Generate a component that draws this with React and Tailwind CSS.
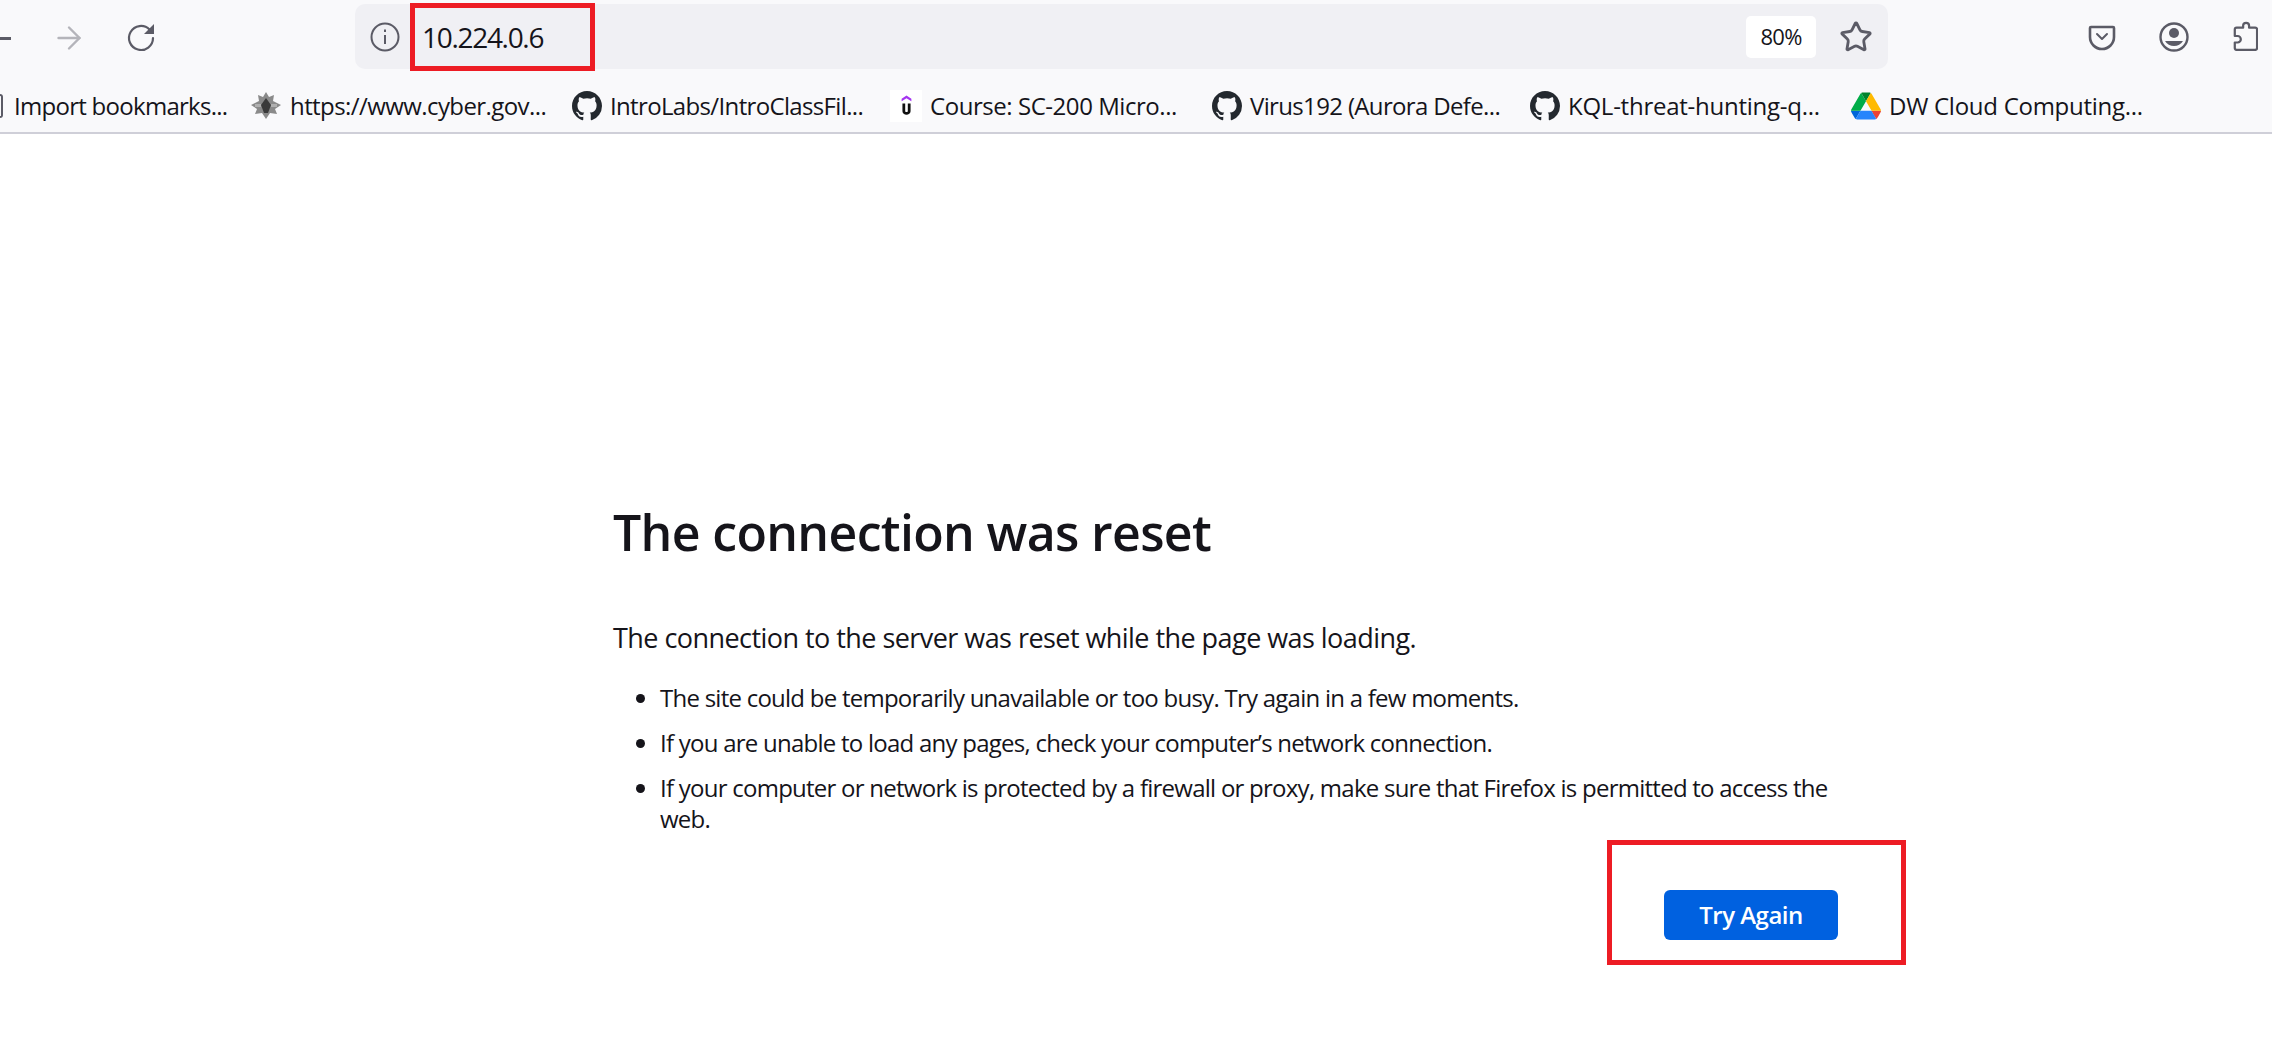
import React from "react";
import { ArrowRight, Star } from "lucide-react";

const FONT = "font-['Open_Sans','Noto_Sans',sans-serif]";

function GithubMark() {
  return (
    <svg viewBox="0 0 16 16" className="w-[30px] h-[30px] shrink-0" fill="#24292f">
      <path d="M8 0C3.58 0 0 3.58 0 8c0 3.54 2.29 6.53 5.47 7.59.4.07.55-.17.55-.38 0-.19-.01-.82-.01-1.49-2.01.37-2.53-.49-2.69-.94-.09-.23-.48-.94-.82-1.13-.28-.15-.68-.52-.01-.53.63-.01 1.08.58 1.23.82.72 1.21 1.87.87 2.33.66.07-.52.28-.87.51-1.07-1.78-.2-3.64-.89-3.64-3.95 0-.87.31-1.59.82-2.15-.08-.2-.36-1.02.08-2.12 0 0 .67-.21 2.2.82.64-.18 1.32-.27 2-.27s1.36.09 2 .27c1.53-1.04 2.2-.82 2.2-.82.44 1.1.16 1.92.08 2.12.51.56.82 1.27.82 2.15 0 3.07-1.87 3.75-3.65 3.95.29.25.54.73.54 1.48 0 1.07-.01 1.93-.01 2.2 0 .21.15.46.55.38A8.01 8.01 0 0 0 16 8c0-4.42-3.58-8-8-8z" />
    </svg>
  );
}

function CyberIcon() {
  return (
    <svg viewBox="0 0 32 32" className="w-[32px] h-[32px] shrink-0">
      <path d="M16 2l3 5 5-2-1 6 8 4-6 4 2 5-7-1-4 6-4-6-7 1 2-5-6-4 8-4-1-6 5 2z" fill="#8a8a8a" />
      <path d="M16 8l5 7-3 8h-4l-3-8z" fill="#3a3a3a" />
      <path d="M5 14h6v3H5zM21 14h6v3h-6z" fill="#b0b0b0" />
    </svg>
  );
}

function UdemyIcon() {
  return (
    <div className="w-[32px] h-[32px] shrink-0 bg-white flex items-center justify-center">
      <svg viewBox="0 0 16 28" className="w-[13px] h-[24px]">
        <path d="M8 1l6 4v3L8 4.5 2 8V5z" fill="#a435f0" />
        <path d="M3 11h3.4v9c0 2 3.2 2 3.2 0v-9H13v9.5c0 5.5-10 5.5-10 0z" fill="#111" />
      </svg>
    </div>
  );
}

function DriveIcon() {
  return (
    <svg viewBox="0 0 87.3 78" className="w-[30px] h-[30px] shrink-0">
      <path d="m6.6 66.85 3.85 6.65c.8 1.4 1.95 2.5 3.3 3.3l13.75-23.8h-27.5c0 1.55.4 3.1 1.2 4.5z" fill="#0066da" />
      <path d="m43.65 25-13.75-23.8c-1.35.8-2.5 1.9-3.3 3.3l-25.4 44a9.06 9.06 0 0 0-1.2 4.5h27.5z" fill="#00ac47" />
      <path d="m73.55 76.8c1.35-.8 2.5-1.9 3.3-3.3l1.6-2.75 7.65-13.25c.8-1.4 1.2-2.95 1.2-4.5h-27.5l5.85 11.5z" fill="#ea4335" />
      <path d="m43.65 25 13.75-23.8c-1.35-.8-2.9-1.2-4.5-1.2h-18.5c-1.6 0-3.15.45-4.5 1.2z" fill="#00832d" />
      <path d="m59.8 53h-32.3l-13.75 23.8c1.35.8 2.9 1.2 4.5 1.2h50.8c1.6 0 3.15-.45 4.5-1.2z" fill="#2684fc" />
      <path d="m73.4 26.5-12.7-22c-.8-1.4-1.95-2.5-3.3-3.3l-13.75 23.8 16.15 28h27.45c0-1.55-.4-3.1-1.2-4.5z" fill="#ffba00" />
    </svg>
  );
}

function ReloadIcon() {
  return (
    <svg viewBox="0 0 32 32" className="w-[32px] h-[32px]" fill="none">
      <path d="M23.5 8.5A12 12 0 1 0 27 17" stroke="#5b5b66" strokeWidth="2.2" strokeLinecap="round" />
      <path d="M28 3v10H18z" fill="#5b5b66" />
    </svg>
  );
}

function InfoIcon() {
  return (
    <svg viewBox="0 0 30 30" className="w-[30px] h-[30px]" fill="none" stroke="#5b5b66" strokeWidth="2">
      <circle cx="15" cy="15" r="13.5" />
      <path d="M15 13v9" />
      <path d="M15 7.5v2.5" />
    </svg>
  );
}

function PocketIcon() {
  return (
    <svg viewBox="0 0 28 28" className="w-[28px] h-[28px]" fill="none" stroke="#5b5b66" strokeWidth="2.6" strokeLinecap="round" strokeLinejoin="round">
      <path d="M3 4h22a1 1 0 0 1 1 1v9a12 12 0 0 1-24 0V5a1 1 0 0 1 1-1z" />
      <path d="M9 11l5 5 5-5" strokeWidth="2" />
    </svg>
  );
}

function AccountIcon() {
  return (
    <svg viewBox="0 0 30 30" className="w-[30px] h-[30px]">
      <circle cx="15" cy="15" r="13.5" fill="none" stroke="#5b5b66" strokeWidth="2.4" />
      <circle cx="15" cy="11" r="5" fill="#5b5b66" />
      <path d="M6 19h18a10.5 10.5 0 0 1-18 0z" fill="#5b5b66" />
    </svg>
  );
}

function PuzzleIcon() {
  return (
    <svg viewBox="0 0 28 32" className="w-[26px] h-[30px]" fill="none" stroke="#5b5b66" strokeWidth="2.4" strokeLinejoin="round">
      <path d="M12 7V5a3.2 3.2 0 0 1 6.4 0v2H25a2 2 0 0 1 2 2v20a2 2 0 0 1-2 2H5a2 2 0 0 1-2-2v-6h3a3.5 3.5 0 0 0 0-7H3V9a2 2 0 0 1 2-2z" />
    </svg>
  );
}

const bookmarks = [
  { icon: <div className="w-[3px] h-[24px] mr-[3px] border-2 border-l-0 border-[#5b5b66] rounded-r-[3px]" />, label: "Import bookmarks...", cls: "w-[250px] tracking-[-0.72px]" },
  { icon: <CyberIcon />, label: "https://www.cyber.gov...", cls: "w-[322px] tracking-[-0.58px]" },
  { icon: <GithubMark />, label: "IntroLabs/IntroClassFil...", cls: "w-[318px] tracking-[-0.65px]" },
  { icon: <UdemyIcon />, label: "Course: SC-200 Micro...", cls: "w-[322px] tracking-[-0.45px]" },
  { icon: <GithubMark />, label: "Virus192 (Aurora Defe...", cls: "w-[318px] tracking-[-0.65px]" },
  { icon: <GithubMark />, label: "KQL-threat-hunting-q...", cls: "w-[321px] tracking-[-0.25px]" },
  { icon: <DriveIcon />, label: "DW Cloud Computing...", cls: "w-[300px] tracking-[-0.27px]" },
];

export default function App() {
  return (
    <div className={`relative h-[1037px] w-[2272px] overflow-hidden bg-white text-[#15141a] ${FONT}`}>
      {/* Toolbar */}
      <div className="h-[134px] bg-[#f9f9fb] border-b-2 border-[#cfcfd8] flex flex-col">
        <div className="h-[69px] pt-[4px] flex items-start">
          <div className="w-[355px] h-[65px] flex items-center shrink-0">
            <div className="w-[11px] h-[3px] mt-[3px] bg-[#5b5b66]" />
            <ArrowRight className="ml-[40px] w-[36px] h-[36px] text-[#b4b4ba] mt-[3px]" strokeWidth={1.6} />
            <div className="ml-[39px]"><ReloadIcon /></div>
          </div>
          <div className="w-[1533px] h-[65px] rounded-[10px] bg-[#f0f0f4] flex items-center shrink-0 pl-[15px] pr-[15px]">
            <InfoIcon />
            <span className="ml-[22px] text-[28px] tracking-[-1.3px]">10.224.0.6</span>
            <div className="ml-auto w-[70px] h-[42px] rounded-[5px] bg-white flex items-center justify-center text-[22px] tracking-[-0.7px]">80%</div>
            <Star className="ml-[23px] w-[34px] h-[34px] text-[#5b5b66]" strokeWidth={2} />
          </div>
          <div className="flex-1 h-[65px] flex items-center">
            <div className="ml-[200px]"><PocketIcon /></div>
            <div className="ml-[43px]"><AccountIcon /></div>
            <div className="ml-[43px] mb-[2px]"><PuzzleIcon /></div>
          </div>
        </div>
        <div className="flex-1 flex items-center pt-[10px] text-[24px]">
          {bookmarks.map((b) => (
            <div key={b.label} className={`flex items-center gap-[8px] shrink-0 whitespace-nowrap ${b.cls}`}>
              {b.icon}
              <span>{b.label}</span>
            </div>
          ))}
        </div>
      </div>

      {/* Error page */}
      <div className="pl-[613px] pt-[363px] w-[1838px]">
        <h1 className="text-[50px] leading-[70px] font-semibold tracking-[-0.65px]">The connection was reset</h1>
        <p className="mt-[53px] text-[27px] leading-[36px] tracking-[-0.55px]">The connection to the server was reset while the page was loading.</p>
        <ul className="mt-[26px] pl-[47px] list-disc text-[24px] leading-[31px] tracking-[-0.75px]">
          <li className="mb-[14px]">The site could be temporarily unavailable or too busy. Try again in a few moments.</li>
          <li className="mb-[14px]">If you are unable to load any pages, check your computer’s network connection.</li>
          <li>If your computer or network is protected by a firewall or proxy, make sure that Firefox is permitted to access the web.</li>
        </ul>
        <div className="mt-[56px] flex justify-end">
          <div className="relative">
            <button className="w-[174px] h-[50px] rounded-[6px] bg-[#0061e0] text-white text-[24px] font-semibold tracking-[-0.5px]">Try Again</button>
            <div className="absolute left-[-57px] top-[-50px] w-[299px] h-[125px] border-[5px] border-[#ed1c24]" />
          </div>
        </div>
      </div>

      {/* URL annotation */}
      <div className="absolute left-[410px] top-[3px] w-[185px] h-[68px] border-[5px] border-[#ed1c24]" />
    </div>
  );
}
